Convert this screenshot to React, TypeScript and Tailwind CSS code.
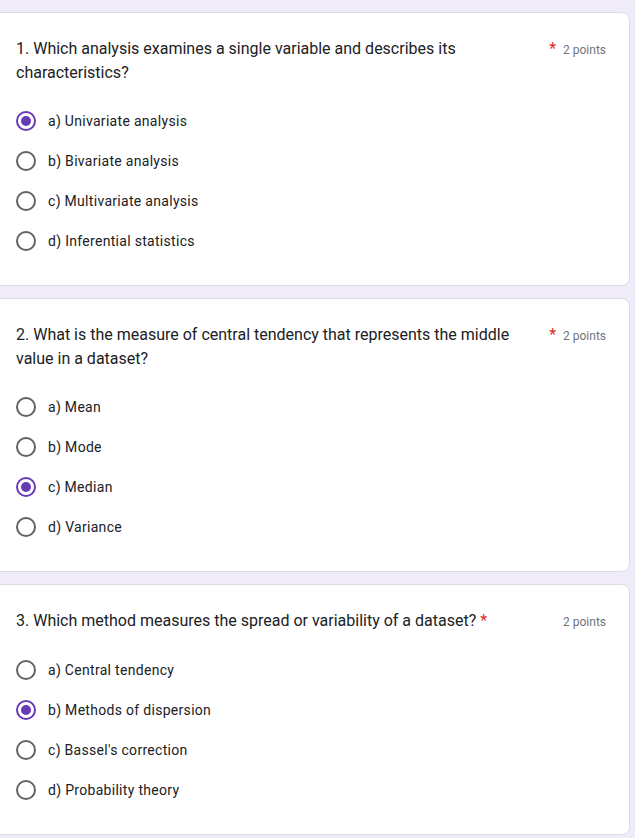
const questions = [
  {
    title: "1. Which analysis examines a single variable and describes its characteristics?",
    options: [
      "a) Univariate analysis",
      "b) Bivariate analysis",
      "c) Multivariate analysis",
      "d) Inferential statistics",
    ],
    selected: 0,
  },
  {
    title: "2. What is the measure of central tendency that represents the middle value in a dataset?",
    options: ["a) Mean", "b) Mode", "c) Median", "d) Variance"],
    selected: 2,
  },
  {
    title: "3. Which method measures the spread or variability of a dataset?",
    options: [
      "a) Central tendency",
      "b) Methods of dispersion",
      "c) Bassel's correction",
      "d) Probability theory",
    ],
    selected: 1,
  },
];

function Radio({ checked }: { checked: boolean }) {
  return (
    <span
      className={
        checked
          ? "flex h-5 w-5 shrink-0 items-center justify-center rounded-full border-2 border-[#673ab7]"
          : "flex h-5 w-5 shrink-0 items-center justify-center rounded-full border-2 border-[#5f6368]"
      }
    >
      {checked && <span className="h-[10px] w-[10px] rounded-full bg-[#673ab7]" />}
    </span>
  );
}

function QuestionCard({
  title,
  options,
  selected,
}: {
  title: string;
  options: string[];
  selected: number;
}) {
  return (
    <div className="ml-[-8px] mr-[5px] rounded-lg border border-[#dadce0] bg-white pb-[24px] pl-[23px] pr-[23px] pt-[24px]">
      <div className="flex items-start">
        <div className="min-w-0 text-[16px] leading-[24px] text-[#202124]">{title}</div>
        <span className="shrink-0 pl-1 text-[16px] leading-[24px] text-[#d93025]">*</span>
        <span className="ml-auto shrink-0 pl-[7px] pt-[1px] text-[12px] leading-[24px] text-[#70757a]">
          2 points
        </span>
      </div>
      <div className="mt-[16px] flex flex-col">
        {options.map((opt, i) => (
          <div key={opt} className="flex h-10 items-center gap-3">
            <Radio checked={i === selected} />
            <span className="text-[14px] leading-[20px] tracking-[0.3px] text-[#202124]">{opt}</span>
          </div>
        ))}
      </div>
    </div>
  );
}

export default function App() {
  return (
    <div
      className="flex min-h-[838px] flex-col gap-3 overflow-hidden bg-[#f0ebf8] pt-3"
      style={{ fontFamily: "Roboto, 'Liberation Sans', Arial, sans-serif" }}
    >
      {questions.map((q) => (
        <QuestionCard key={q.title} {...q} />
      ))}
    </div>
  );
}
